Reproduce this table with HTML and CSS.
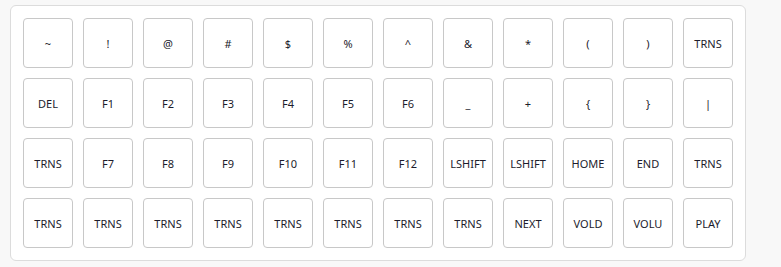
FILE: index.html
```html
<!DOCTYPE html>
<html lang="en">
<head>
    <meta charset="UTF-8">
    <meta name="viewport" content="width=device-width, initial-scale=1.0">
    <title>Keymap Layer</title>
    <link rel="stylesheet" href="styles.css">
</head>
<body>
    <div class="layer">
        <div class="key">~</div>
        <div class="key">!</div>
        <div class="key">@</div>
        <div class="key">#</div>
        <div class="key">$</div>
        <div class="key">%</div>
        <div class="key">^</div>
        <div class="key">&amp;</div>
        <div class="key">*</div>
        <div class="key">(</div>
        <div class="key">)</div>
        <div class="key">TRNS</div>

        <div class="key">DEL</div>
        <div class="key">F1</div>
        <div class="key">F2</div>
        <div class="key">F3</div>
        <div class="key">F4</div>
        <div class="key">F5</div>
        <div class="key">F6</div>
        <div class="key">_</div>
        <div class="key">+</div>
        <div class="key">{</div>
        <div class="key">}</div>
        <div class="key">|</div>

        <div class="key">TRNS</div>
        <div class="key">F7</div>
        <div class="key">F8</div>
        <div class="key">F9</div>
        <div class="key">F10</div>
        <div class="key">F11</div>
        <div class="key">F12</div>
        <div class="key">LSHIFT</div>
        <div class="key">LSHIFT</div>
        <div class="key">HOME</div>
        <div class="key">END</div>
        <div class="key">TRNS</div>

        <div class="key">TRNS</div>
        <div class="key">TRNS</div>
        <div class="key">TRNS</div>
        <div class="key">TRNS</div>
        <div class="key">TRNS</div>
        <div class="key">TRNS</div>
        <div class="key">TRNS</div>
        <div class="key">TRNS</div>
        <div class="key">NEXT</div>
        <div class="key">VOLD</div>
        <div class="key">VOLU</div>
        <div class="key">PLAY</div>
    </div>
</body>
</html>
```

FILE: styles.css
```css
body {
    font-family: "Noto Sans", "Open Sans", sans-serif;
    margin: 0;
    padding: 5px 10px;
    background-color: #f8f8f8;
}

.layer {
    display: grid;
    grid-template-columns: repeat(12, 50px);
    grid-auto-rows: 50px;
    gap: 10px;
    width: 710px;
    padding: 12px 12px 12px 12px;
    background-color: #fff;
    border: 1px solid #dcdcdc;
    border-radius: 6px;
}

.key {
    display: flex;
    align-items: center;
    justify-content: center;
    box-sizing: border-box;
    border: 1px solid #c8c8c8;
    border-radius: 4px;
    font-size: 11px;
    color: #1c1c2c;
    background-color: #fff;
}
```
